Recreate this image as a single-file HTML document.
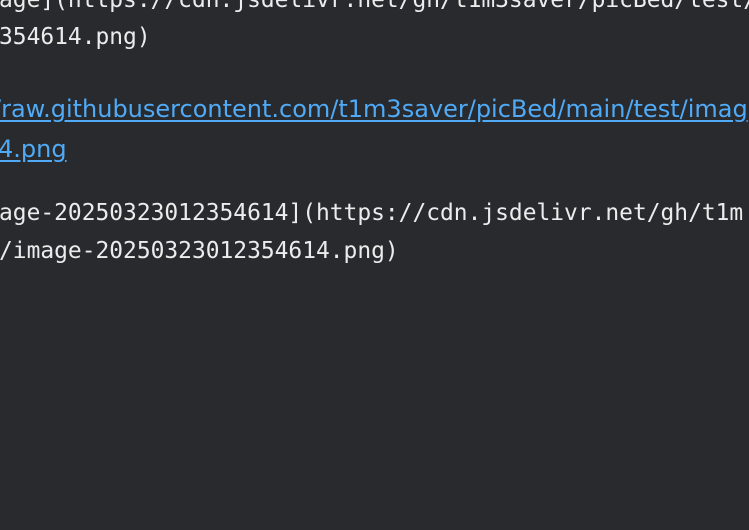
<!DOCTYPE html>
<html><head><meta charset="utf-8"><style>
html,body{margin:0;padding:0;width:749px;height:530px;overflow:hidden;background:#282a2d;}
.l{position:absolute;white-space:nowrap;left:0;}
.m{font-family:"DejaVu Sans Mono","Liberation Mono",monospace;font-size:22.9px;color:#ececec;}
.a{font-family:"DejaVu Sans","Liberation Sans",sans-serif;font-size:24px;color:#50aaf6;text-decoration:underline;text-underline-offset:3px;}
</style></head><body>
<div class="l m" style="top:-13px;left:-1px">age](https://cdn.jsdelivr.net/gh/t1m3saver/picBed/test/</div>
<div class="l m" style="top:24px;left:-1px">354614.png)</div>
<div class="l a" style="top:95px;left:-7px">/raw.githubusercontent.com/t1m3saver/picBed/main/test/imag</div>
<div class="l a" style="top:135px;left:-2px">4.png</div>
<div class="l m" style="top:200px;left:-1px">age-20250323012354614](https://cdn.jsdelivr.net/gh/t1m</div>
<div class="l m" style="top:238px;left:-1px">/image-20250323012354614.png)</div>
</body></html>
